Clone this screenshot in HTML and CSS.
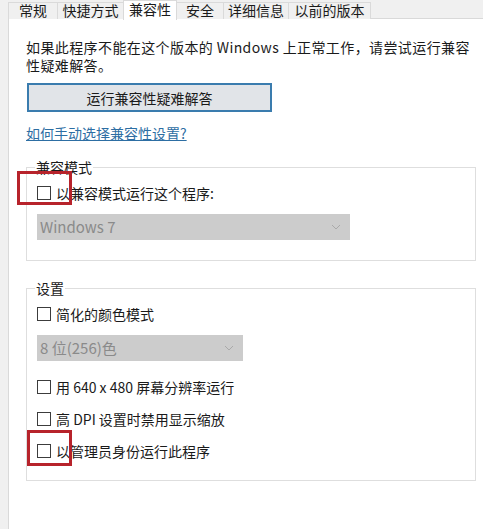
FILE: index.html
```html
<!DOCTYPE html>
<html lang="zh-CN">
<head>
    <meta charset="UTF-8">
    <meta name="viewport" content="width=device-width, initial-scale=1.0">
    <title>属性 - 兼容性</title>
    <link rel="stylesheet" href="styles.css">
</head>
<body>

    <div class="tabs">
        <div class="tab">常规</div>
        <div class="tab">快捷方式</div>
        <div class="tab tab-active">兼容性</div>
        <div class="tab">安全</div>
        <div class="tab">详细信息</div>
        <div class="tab">以前的版本</div>
    </div>

    <div class="panel">
        <p class="intro">如果此程序不能在这个版本的 Windows 上正常工作，请尝试运行兼容性疑难解答。</p>

        <button class="run-button">运行兼容性疑难解答</button>

        <a class="help-link" href="#">如何手动选择兼容性设置?</a>

        <fieldset class="group">
            <legend>兼容模式</legend>
            <label class="check">
                <span class="box"></span>以兼容模式运行这个程序:
                <span class="mark mark-compat"></span>
            </label>
            <div class="select select-wide">
                <span>Windows 7</span>
                <svg width="10" height="6" viewBox="0 0 10 6"><path d="M1 1 L5 5 L9 1" fill="none" stroke="#a9a9a9" stroke-width="1"/></svg>
            </div>
        </fieldset>

        <fieldset class="group group-settings">
            <legend>设置</legend>
            <label class="check">
                <span class="box"></span>简化的颜色模式
            </label>
            <div class="select select-narrow">
                <span>8 位(256)色</span>
                <svg width="10" height="6" viewBox="0 0 10 6"><path d="M1 1 L5 5 L9 1" fill="none" stroke="#a9a9a9" stroke-width="1"/></svg>
            </div>
            <label class="check">
                <span class="box"></span>用 640 x 480 屏幕分辨率运行
            </label>
            <label class="check">
                <span class="box"></span>高 DPI 设置时禁用显示缩放
            </label>
            <label class="check">
                <span class="box"></span>以管理员身份运行此程序
                <span class="mark mark-admin"></span>
            </label>
        </fieldset>
    </div>

</body>
</html>
```

FILE: styles.css
```css
body {
    margin: 0;
    background-color: #f0f0f0;
    color: #1a1a1a;
    font-family: "Noto Sans CJK SC", "Noto Sans", sans-serif;
    font-size: 14px;
    line-height: 18px;
    overflow: hidden;
}

.tabs {
    display: grid;
    grid-template-columns: 49px 66px 53px 47px 65px 82px;
    align-items: end;
    height: 18px;
    margin-left: 8px;
    position: relative;
    z-index: 1;
}

.tab {
    height: 16px;
    line-height: 15px;
    text-align: center;
    background-color: #f0f0f0;
    border: 1px solid #dadada;
    border-bottom: none;
    margin-right: -1px;
    color: #1a1a1a;
}

.tab-active {
    height: 19px;
    margin-bottom: -1px;
    line-height: 17px;
    background-color: #ffffff;
    position: relative;
    z-index: 2;
}

.panel {
    margin-left: 8px;
    width: 450px;
    height: 492px;
    padding: 19px 21px 0 17px;
    background-color: #ffffff;
    border: 1px solid #d9d9d9;
}

.intro {
    margin: 0;
    letter-spacing: 0.4px;
}

.run-button {
    display: block;
    width: 245px;
    height: 29px;
    margin-top: 9px;
    margin-left: 1px;
    padding: 0;
    border: 2px solid #3a7cae;
    background-color: #e1e4e8;
    font-family: inherit;
    font-size: 14px;
    color: #1a1a1a;
}

.help-link {
    display: inline-block;
    margin-top: 12px;
    color: #2d6ea3;
    text-decoration: underline;
}

.group {
    margin: 16px 0 0 0;
    padding: 8px 0 20px 10px;
    border: 1px solid #dedede;
}

.group-settings {
    margin-top: 18px;
}

.group legend {
    margin-left: -2px;
    padding: 0 1px;
    color: #1a1a1a;
}

.check {
    display: flex;
    align-items: center;
    gap: 5px;
    position: relative;
    height: 18px;
}

.box {
    width: 12px;
    height: 12px;
    border: 1px solid #3c3c3c;
    background-color: #ffffff;
}

.select + .check {
    margin-top: 17px;
}

.check + .check {
    margin-top: 14px;
}

.select {
    display: flex;
    justify-content: space-between;
    align-items: center;
    height: 26px;
    margin-top: 12px;
    padding: 0 9px 0 3px;
    box-sizing: border-box;
    background-color: #cccccc;
    color: #8a8a8a;
    font-size: 15px;
}

.select-wide {
    width: 313px;
}

.select-narrow {
    width: 206px;
}

/* red annotation frames drawn over the checkboxes */
.mark {
    position: absolute;
    border: 3px solid #b7232b;
    box-sizing: border-box;
}

.mark-compat {
    left: -20px;
    top: -13px;
    width: 55px;
    height: 34px;
}

.mark-admin {
    left: -10px;
    top: -12px;
    width: 45px;
    height: 36px;
}
```
